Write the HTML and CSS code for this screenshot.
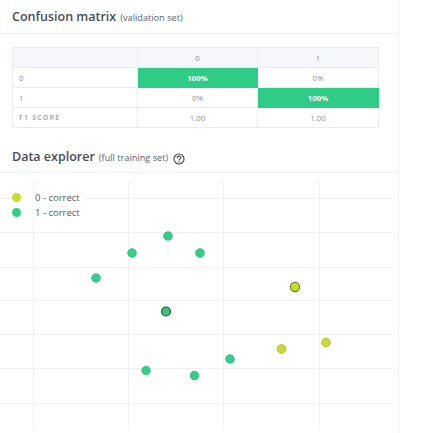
FILE: index.html
```html
<!DOCTYPE html>
<html>
<head>
<meta charset="utf-8">
<link rel="stylesheet" href="styles.css">
</head>
<body>
<div class="panel">
  <div class="section-head">
    <span class="title">Confusion matrix</span>
    <span class="sub">(validation set)</span>
  </div>
  <table class="matrix">
    <colgroup><col class="c1"><col class="c2"><col class="c3"></colgroup>
    <tr class="head"><td></td><td class="num">0</td><td class="num">1</td></tr>
    <tr><td class="lbl">0</td><td class="num hit">100%</td><td class="num">0%</td></tr>
    <tr><td class="lbl">1</td><td class="num">0%</td><td class="num hit">100%</td></tr>
    <tr><td class="lbl f1">F1 SCORE</td><td class="num">1.00</td><td class="num">1.00</td></tr>
  </table>
  <div class="section-head second">
    <span class="title">Data explorer</span>
    <span class="sub">(full training set)</span>
    <svg class="help" width="12" height="12" viewBox="0 0 11 11">
      <circle cx="5.5" cy="5.5" r="4.6" fill="none" stroke="#4a4f5c" stroke-width="1.1"/>
      <path d="M3.9 4.3 C3.9 3.3 4.6 2.8 5.5 2.8 C6.4 2.8 7.1 3.3 7.1 4.1 C7.1 5.1 5.6 5.2 5.6 6.4" fill="none" stroke="#4a4f5c" stroke-width="1.1" stroke-linecap="round"/>
      <circle cx="5.6" cy="8.1" r="0.7" fill="#4a4f5c"/>
    </svg>
  </div>
  <div class="plot">
    <svg class="chart" width="398" height="260" viewBox="0 0 398 260">
      <g stroke="#eeeff1" stroke-width="1">
        <line x1="0" y1="25.5" x2="393" y2="25.5"/>
        <line x1="0" y1="59.5" x2="393" y2="59.5"/>
        <line x1="0" y1="94.5" x2="393" y2="94.5"/>
        <line x1="0" y1="127.5" x2="393" y2="127.5"/>
        <line x1="0" y1="161.5" x2="393" y2="161.5"/>
        <line x1="0" y1="195.5" x2="393" y2="195.5"/>
        <line x1="0" y1="230.5" x2="393" y2="230.5"/>
        <line x1="33.5" y1="8" x2="33.5" y2="255"/>
        <line x1="128.5" y1="8" x2="128.5" y2="255"/>
        <line x1="223.5" y1="8" x2="223.5" y2="255"/>
        <line x1="319.5" y1="8" x2="319.5" y2="255"/>
      </g>
      <g fill="#33d083" stroke="#2bb874" stroke-width="0.8">
        <circle cx="168" cy="63" r="4.3"/>
        <circle cx="132" cy="80" r="4.3"/>
        <circle cx="200" cy="80" r="4.3"/>
        <circle cx="96" cy="105" r="4.3"/>
        <circle cx="146" cy="197.5" r="4.3"/>
        <circle cx="194.5" cy="202.5" r="4.3"/>
        <circle cx="230" cy="186" r="4.3"/>
      </g>
      <circle cx="166" cy="138.5" r="4.5" fill="#33c47a" stroke="#2a4d3a" stroke-width="1.1"/>
      <g fill="#c8dc2a" stroke="#a7b432" stroke-width="0.9">
        <circle cx="281.5" cy="176" r="4.3"/>
        <circle cx="326" cy="169.5" r="4.3"/>
      </g>
      <circle cx="295" cy="114" r="4.6" fill="#c8dc2a" stroke="#6e7a2a" stroke-width="1.1"/>
      <rect x="399" y="254" width="1.5" height="1.5" fill="#222"/>
    </svg>
    <div class="legend">
      <div class="item"><span class="dot yellow"></span>0 - correct</div>
      <div class="item"><span class="dot green"></span>1 - correct</div>
    </div>
  </div>
</div>
</body>
</html>
```
FILE: styles.css
```css
* { box-sizing: border-box; }
html, body { margin: 0; padding: 0; background: #fff; }
body { font-family: "Open Sans", "Liberation Sans", sans-serif; color: #4a4f5c; }
.panel {
  width: 399px;
  height: 433px;
  border-right: 1px solid #f0f1f3;
  overflow: hidden;
}
.section-head {
  height: 34px;
  padding: 8px 0 0 12px;
  border-bottom: 1px solid #eff0f2;
  display: flex;
  align-items: baseline;
  gap: 4px;
}
.section-head.second { margin-top: 8px; height: 37px; padding-top: 12px; }
.title { font-size: 12.5px; font-weight: 600; color: #484d5a; }
.sub { font-size: 9.2px; color: #5a5f6a; }
.help { align-self: center; position: relative; top: -1px; margin-left: 1px; }
.matrix {
  margin: 13px 0 0 12px;
  width: 366px;
  border-collapse: collapse;
  table-layout: fixed;
  font-size: 7.8px;
  color: #8a9099;
}
.matrix col.c1 { width: 125px; }
.matrix col.c2 { width: 120px; }
.matrix col.c3 { width: 121px; }
.matrix td {
  height: 20px;
  border: 1px solid #e9ecf0;
  padding: 0 6px;
}
.matrix tr.head td { background: #f5f7fa; }
.matrix td.num { text-align: center; }
.matrix td.lbl { text-align: left; }
.matrix td.f1 { letter-spacing: 1.2px; font-size: 7px; font-weight: 600; color: #9aa0a8; }
.matrix td.hit { background: #2ecc87; color: #fff; font-weight: 700; border-color: #2ecc87; }
.plot { position: relative; height: 260px; }
.chart { display: block; }
.legend {
  position: absolute;
  left: 12px;
  top: 17px;
  background: #fff;
  padding: 0 4px 0 0;
  font-size: 9.5px;
  color: #555a64;
}
.item { display: flex; align-items: center; height: 15px; }
.dot {
  width: 9px;
  height: 9px;
  border-radius: 50%;
  margin-right: 14px;
}
.dot.yellow { background: #c8dc2a; }
.dot.green { background: #33d083; }
```
